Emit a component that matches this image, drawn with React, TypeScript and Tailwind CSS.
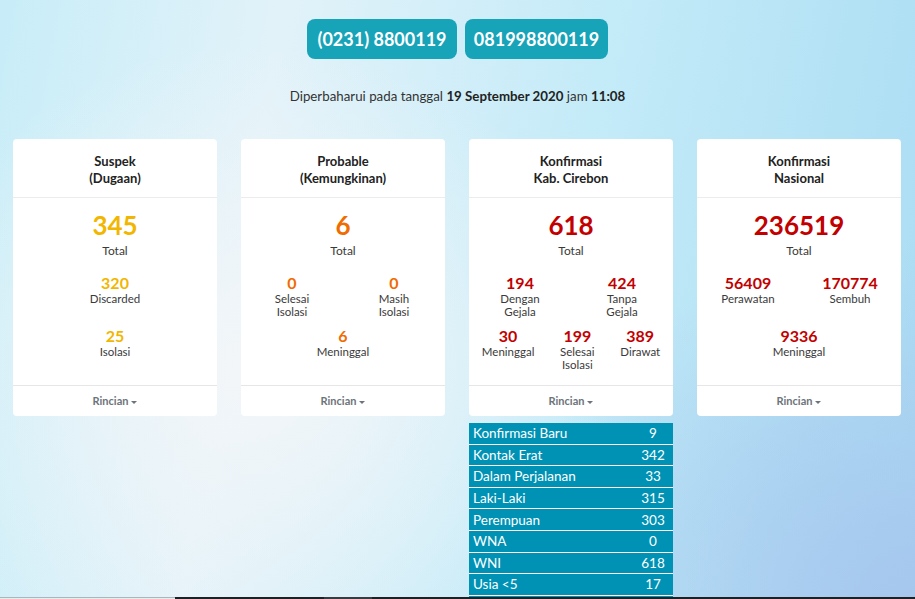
import { ReactNode } from "react";

type Stat = { value: string; label: string[] };

interface CardProps {
  title: string[];
  total: string;
  color: string;
  rows: { kind: "one" | "two" | "three"; stats: Stat[] }[];
}

const cards: CardProps[] = [
  {
    title: ["Suspek", "(Dugaan)"],
    total: "345",
    color: "text-[#f2b600]",
    rows: [
      { kind: "one", stats: [{ value: "320", label: ["Discarded"] }] },
      { kind: "one", stats: [{ value: "25", label: ["Isolasi"] }] },
    ],
  },
  {
    title: ["Probable", "(Kemungkinan)"],
    total: "6",
    color: "text-[#f06b00]",
    rows: [
      {
        kind: "two",
        stats: [
          { value: "0", label: ["Selesai", "Isolasi"] },
          { value: "0", label: ["Masih", "Isolasi"] },
        ],
      },
      { kind: "one", stats: [{ value: "6", label: ["Meninggal"] }] },
    ],
  },
  {
    title: ["Konfirmasi", "Kab. Cirebon"],
    total: "618",
    color: "text-[#c20000]",
    rows: [
      {
        kind: "two",
        stats: [
          { value: "194", label: ["Dengan", "Gejala"] },
          { value: "424", label: ["Tanpa", "Gejala"] },
        ],
      },
      {
        kind: "three",
        stats: [
          { value: "30", label: ["Meninggal"] },
          { value: "199", label: ["Selesai", "Isolasi"] },
          { value: "389", label: ["Dirawat"] },
        ],
      },
    ],
  },
  {
    title: ["Konfirmasi", "Nasional"],
    total: "236519",
    color: "text-[#c20000]",
    rows: [
      {
        kind: "two",
        stats: [
          { value: "56409", label: ["Perawatan"] },
          { value: "170774", label: ["Sembuh"] },
        ],
      },
      { kind: "one", stats: [{ value: "9336", label: ["Meninggal"] }] },
    ],
  },
];

const details = [
  ["Konfirmasi Baru", "9"],
  ["Kontak Erat", "342"],
  ["Dalam Perjalanan", "33"],
  ["Laki-Laki", "315"],
  ["Perempuan", "303"],
  ["WNA", "0"],
  ["WNI", "618"],
  ["Usia <5", "17"],
  ["Usia 5-17", "41"],
];

function StatItem({ stat, color }: { stat: Stat; color: string }) {
  return (
    <div className="flex flex-col items-center text-center">
      <span className={`text-[16px] leading-[18px] font-bold ${color}`}>{stat.value}</span>
      {stat.label.map((l) => (
        <span key={l} className="text-[11.5px] leading-[13px] text-[#3a3a3a]">
          {l}
        </span>
      ))}
    </div>
  );
}

function Card({ title, total, color, rows, children }: CardProps & { children?: ReactNode }) {
  return (
    <div className="flex flex-col">
      <div className="bg-white rounded-[4px] flex flex-col">
        <div className="pt-[14px] pb-[10px] border-b border-[#ececec] text-center text-[13px] leading-[17px] font-bold text-[#222]">
          {title.map((t) => (
            <div key={t}>{t}</div>
          ))}
        </div>

        <div className="h-[187px] flex flex-col pt-[12px]">
          <div className={`text-center text-[26px] leading-[31px] font-bold ${color}`}>{total}</div>
          <div className="text-center text-[12px] leading-[16px] mt-[2px] text-[#3a3a3a]">Total</div>
          <div className="mt-[15px]">
            {rows.map((row, i) => (
              <div
                key={i}
                className={
                  row.kind === "two"
                    ? "h-[53px] grid grid-cols-2"
                    : row.kind === "three"
                    ? "h-[53px] flex justify-around"
                    : "h-[53px] flex justify-center"
                }
              >
                {row.stats.map((s) => (
                  <StatItem key={s.value + s.label[0]} stat={s} color={color} />
                ))}
              </div>
            ))}
          </div>
        </div>

        <div className="h-[31px] border-t border-[#e6e6e6] flex items-center justify-center gap-[3px] pt-[1px] text-[11px] font-bold text-[#6c737a]">
          Rincian
          <span className="w-0 h-0 border-l-[3px] border-r-[3px] border-t-[3px] border-l-transparent border-r-transparent border-t-[#6c737a] mt-[1px]" />
        </div>
      </div>
      {children}
    </div>
  );
}

export default function App() {
  return (
    <div
      className="relative h-[599px] overflow-hidden font-['Lato','Liberation_Sans',sans-serif] bg-[radial-gradient(ellipse_40%_55%_at_28%_62%,#f3f6f9_0%,rgba(243,246,249,0)_100%),radial-gradient(ellipse_45%_60%_at_100%_100%,#a6c6ee_0%,rgba(166,198,238,0)_100%),linear-gradient(100deg,#c8edf8_0%,#e2f2f9_28%,#c4ebf8_60%,#a9dcf3_100%)]"
    >
      <div className="flex justify-center gap-2 pt-[19px]">
        <div className="w-[150px] h-[40px] rounded-[8px] bg-[#17a3b8] text-white text-[18px] font-bold flex items-center justify-center">
          (0231) 8800119
        </div>
        <div className="w-[143px] h-[40px] rounded-[8px] bg-[#17a3b8] text-white text-[18px] font-bold flex items-center justify-center">
          081998800119
        </div>
      </div>

      <p className="mt-[28px] text-center text-[13.3px] leading-[18px] text-[#333]">
        Diperbaharui pada tanggal <b className="text-[#222]">19 September 2020</b> jam{" "}
        <b className="text-[#222]">11:08</b>
      </p>

      <div className="mt-[34px] pl-[13px] pr-[14px] grid grid-cols-4 gap-6 items-start">
        {cards.map((c, i) => (
          <Card key={c.title.join()} {...c}>
            {i === 2 && (
              <div className="mt-[7px] bg-[#0092b5] text-white text-[13.5px]">
                {details.map(([k, v]) => (
                  <div key={k} className="h-[21.6px] border-b border-white flex items-center">
                    <span className="flex-1 pl-1">{k}</span>
                    <span className="w-[40px] text-center">{v}</span>
                  </div>
                ))}
              </div>
            )}
          </Card>
        ))}
      </div>

      <div className="fixed bottom-0 left-0 right-0 h-[2px] flex">
        <div className="w-[175px] bg-[#ecebe8] border-t border-[#a9b6bf]" />
        <div className="w-[149px] bg-[#1f2023]" />
        <div className="w-[48px] bg-[#3a3b3e]" />
        <div className="flex-1 bg-[#1f2023]" />
      </div>
    </div>
  );
}
